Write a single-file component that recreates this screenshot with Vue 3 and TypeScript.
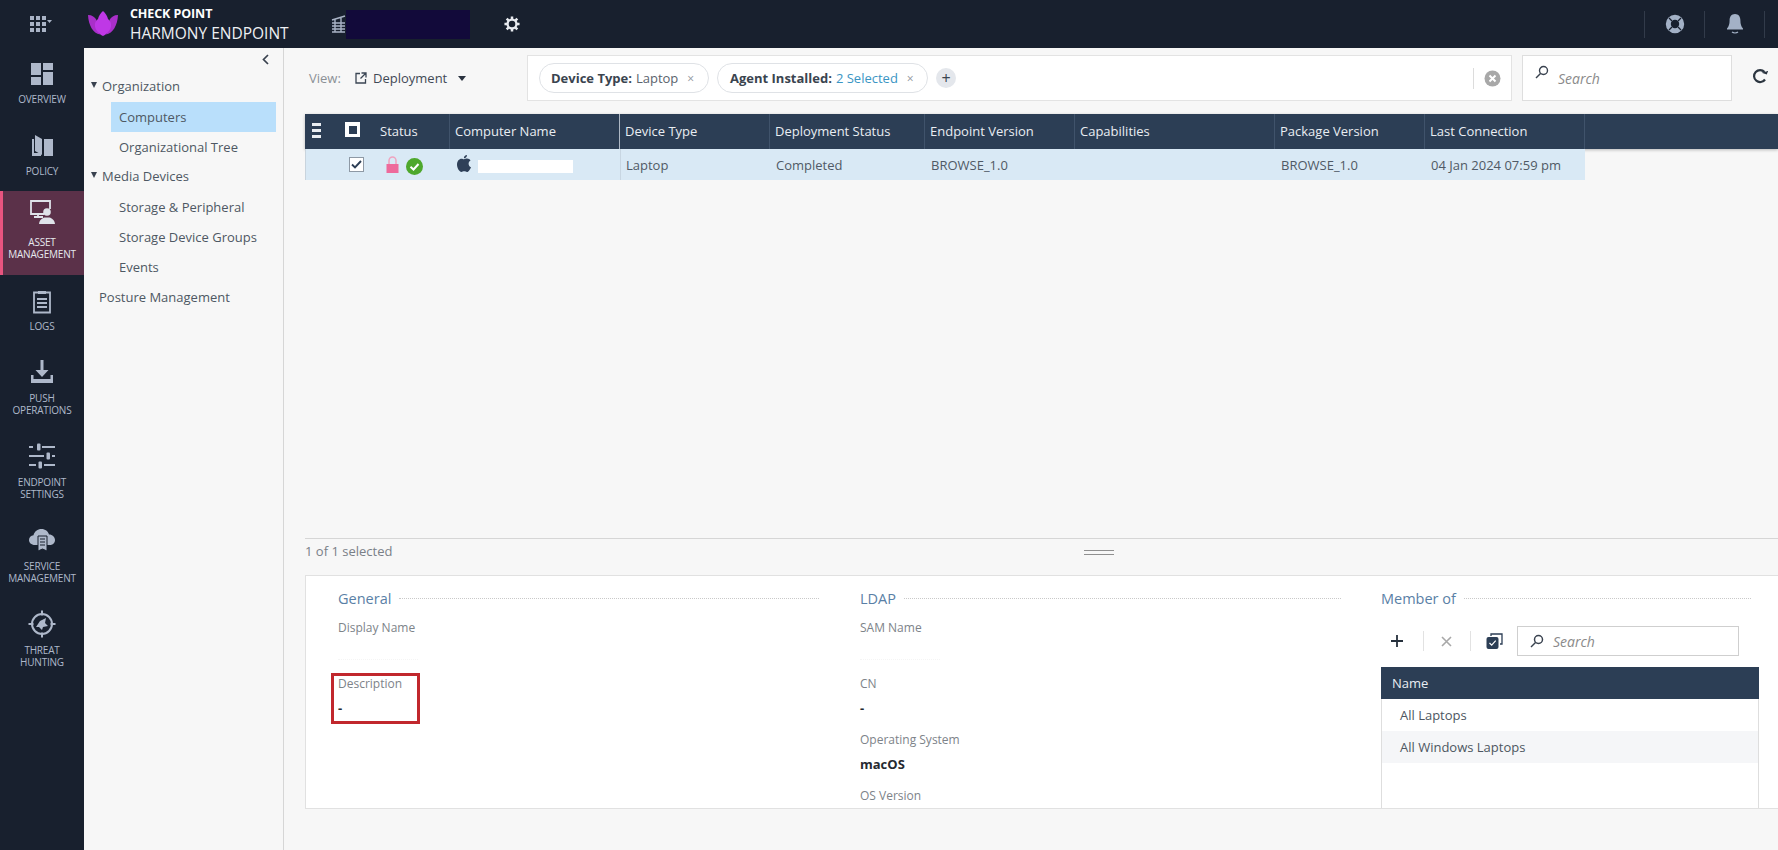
<script setup lang="ts">
interface RailItem { id: string; lines: string[]; kind: string }
const rail: RailItem[] = [
  { id: 'overview', lines: ['OVERVIEW'], kind: 'single' },
  { id: 'policy', lines: ['POLICY'], kind: 'single' },
  { id: 'asset', lines: ['ASSET', 'MANAGEMENT'], kind: 'active' },
  { id: 'logs', lines: ['LOGS'], kind: 'logs' },
  { id: 'push', lines: ['PUSH', 'OPERATIONS'], kind: 'double' },
  { id: 'settings', lines: ['ENDPOINT', 'SETTINGS'], kind: 'double' },
  { id: 'service', lines: ['SERVICE', 'MANAGEMENT'], kind: 'double' },
  { id: 'threat', lines: ['THREAT', 'HUNTING'], kind: 'double' },
]
const columns = ['Device Type', 'Deployment Status', 'Endpoint Version', 'Capabilities', 'Package Version', 'Last Connection']
const cells = ['Laptop', 'Completed', 'BROWSE_1.0', '', 'BROWSE_1.0', '04 Jan 2024 07:59 pm']
</script>

<template>
  <div class="app">
    <header class="topbar">
      <div class="apps">
        <svg width="24" height="16" viewBox="0 0 24 16" fill="#a9b3c6">
          <rect x="0" y="0" width="4" height="4" /><rect x="6" y="0" width="4" height="4" /><rect x="12" y="0" width="4" height="4" />
          <rect x="0" y="6" width="4" height="4" /><rect x="6" y="6" width="4" height="4" /><rect x="12" y="6" width="4" height="4" />
          <rect x="0" y="12" width="4" height="4" /><rect x="6" y="12" width="4" height="4" /><rect x="12" y="12" width="4" height="4" />
          <path d="M17 4h5l-2.500 3z" />
        </svg>
      </div>
      <svg class="lotus" width="32" height="26" viewBox="0 0 32 26">
        <path fill="#a92fc9" d="M1 5c4 0 7 2 8.500 5-.8 5 .6 10 3.600 14.500C6 23.500 1.500 15 1 5zM31 5c-4 0-7 2-8.500 5 .8 5-.6 10-3.600 14.500C26 23.500 30.500 15 31 5z" />
        <path fill="#bf38e6" d="M16 1c2.600 2.400 4.300 5 5 8 2.400 1.800 3.500 4.500 3 7.500-.5 3.600-4 7.500-8 9.500-4-2-7.500-5.900-8-9.500-.5-3 .6-5.700 3-7.500.7-3 2.400-5.600 5-8z" />
      </svg>
      <div class="brand">
        <div class="brand-top">CHECK POINT</div>
        <div class="brand-bottom">HARMONY ENDPOINT</div>
      </div>
      <svg class="tower" width="15" height="19" viewBox="0 0 15 19" fill="none" stroke="#a9b3c6" stroke-width="1.400">
        <path d="M1 5l13-4M1 8h13M1 11h13M1 14h13M1 17h13M4 4v13M10 2v15" />
      </svg>
      <div class="tenant"></div>
      <svg class="gear" width="16" height="16" viewBox="0 0 18 18">
        <circle cx="9" cy="9" r="5" fill="none" stroke="#e8ebf0" stroke-width="2.600" />
        <g stroke="#e8ebf0" stroke-width="2.800" stroke-linecap="butt">
          <path d="M9 0.500v3M9 14.500v3M0.500 9h3M14.500 9h3M3 3l2 2M13 13l2 2M3 15l2-2M13 5l2-2" />
        </g>
      </svg>
      <div class="top-right">
        <span class="divider"></span>
        <span class="top-icon">
          <svg width="20" height="20" viewBox="0 0 20 20">
            <circle cx="10" cy="10" r="6.700" fill="none" stroke="#a3b1c6" stroke-width="5" />
            <g stroke="#18202e" stroke-width="1.300">
              <path d="M4 4l3 3M16 4l-3 3M4 16l3-3M16 16l-3-3" />
            </g>
          </svg>
        </span>
        <span class="divider"></span>
        <span class="top-icon">
          <svg width="18" height="22" viewBox="0 0 18 22" fill="#a3b1c6">
            <path d="M9 1c3.600 0 5.400 2.800 5.400 6.400 0 3.400.8 6 2.600 8.100v1H1v-1c1.800-2.100 2.600-4.700 2.600-8.100C3.600 3.800 5.400 1 9 1z" />
            <path d="M6 19c1.500 1.300 4.500 1.300 6 0" fill="none" stroke="#a3b1c6" stroke-width="1.200" />
          </svg>
        </span>
        <span class="divider"></span>
      </div>
    </header>

    <div class="body">
      <nav class="rail">
        <div v-for="item in rail" :key="item.id" class="rail-item" :class="item.kind">
          <div class="rail-icon">
            <svg v-if="item.id === 'overview'" width="24" height="24" viewBox="0 0 24 24" fill="#aeb8ca">
              <rect x="1" y="1" width="10" height="12" /><rect x="13" y="1" width="10" height="7" />
              <rect x="1" y="15" width="10" height="8" /><rect x="13" y="10" width="10" height="13" />
            </svg>
            <svg v-else-if="item.id === 'policy'" width="24" height="24" viewBox="0 0 24 24" fill="#aeb8ca">
              <path d="M2 5h2v14h7v3H2z" /><path d="M5 1l7 4v16l-7-4z" /><path d="M14 5h9v17h-9z" />
            </svg>
            <svg v-else-if="item.id === 'asset'" width="26" height="26" viewBox="0 0 26 26" fill="none">
              <path d="M15 15H2V2h19v8" stroke="#dfe3ea" stroke-width="1.800" />
              <path d="M5 18h9M9 15v3" stroke="#dfe3ea" stroke-width="1.800" />
              <circle cx="18" cy="13" r="3.800" fill="#dfe3ea" />
              <path d="M10 25c.4-4 3.300-6 5.500-6.500h5c2.200.5 5 2.500 5.500 6.500z" fill="#dfe3ea" />
            </svg>
            <svg v-else-if="item.id === 'logs'" width="22" height="24" viewBox="0 0 22 24" fill="none" stroke="#aeb8ca">
              <path d="M7 2.500H3v20h16v-20h-4" stroke-width="1.800" />
              <path d="M7 1h8v3H7z" fill="#aeb8ca" stroke="none" />
              <path d="M6 9h10M6 13h10M6 17h10" stroke-width="1.800" />
            </svg>
            <svg v-else-if="item.id === 'push'" width="24" height="24" viewBox="0 0 24 24" fill="#aeb8ca">
              <path d="M10.500 0h3v10h5l-6.500 7-6.500-7h5z" /><path d="M1 15h2.500v4h17v-4H23v8H1z" />
            </svg>
            <svg v-else-if="item.id === 'settings'" width="28" height="26" viewBox="0 0 28 26" fill="#aeb8ca">
              <rect x="1" y="3" width="4" height="2" /><rect x="9" y="0.500" width="3.500" height="7" rx="1" /><rect x="14" y="3" width="13" height="2" />
              <rect x="1" y="12" width="15" height="2" /><rect x="18.500" y="9.500" width="3.500" height="7" rx="1" /><rect x="24" y="12" width="3" height="2" />
              <rect x="1" y="21" width="7" height="2" /><rect x="10.500" y="18.500" width="3.500" height="7" rx="1" /><rect x="16" y="21" width="11" height="2" />
            </svg>
            <svg v-else-if="item.id === 'service'" width="28" height="24" viewBox="0 0 28 24">
              <path fill="#aeb8ca" d="M7 17C3 17 1 14.500 1 12s1.800-4.500 4.500-4.800C6.500 3.500 9.500 1 13.500 1c3.800 0 6.500 2.300 7.500 5.500 3.500 0 6 2.500 6 5.500 0 2.800-2 5-5 5z" />
              <path fill="#aeb8ca" stroke="#18202e" stroke-width="1" d="M10 8h9v15l-4.500-2-4.500 2z" />
              <path stroke="#18202e" stroke-width="1" d="M12 11h5M12 14h5M12 17h5" />
            </svg>
            <svg v-else-if="item.id === 'threat'" width="28" height="28" viewBox="0 0 28 28" fill="none" stroke="#aeb8ca">
              <circle cx="14" cy="14" r="10" stroke-width="2" />
              <path d="M14 0.500v5M14 22.500v5M0.500 14h5M22.500 14h5" stroke-width="2" />
              <path d="M8 17l4-6 6-3 -1 5 3 3-5 1-1 3-3-3z" fill="#aeb8ca" stroke="none" />
            </svg>
          </div>
          <div class="rail-label">
            <div v-for="line in item.lines" :key="line">{{ line }}</div>
          </div>
        </div>
      </nav>

      <aside class="tree">
        <div class="collapse">
          <svg width="7" height="11" viewBox="0 0 7 11" fill="none" stroke="#39424f" stroke-width="1.700"><path d="M6 1L1.500 5.500 6 10" /></svg>
        </div>
        <div class="tree-row group"><span class="tri"></span>Organization</div>
        <div class="tree-row child selected">Computers</div>
        <div class="tree-row child">Organizational Tree</div>
        <div class="tree-row group"><span class="tri"></span>Media Devices</div>
        <div class="tree-row child">Storage &amp; Peripheral</div>
        <div class="tree-row child">Storage Device Groups</div>
        <div class="tree-row child">Events</div>
        <div class="tree-row root">Posture Management</div>
      </aside>

      <main class="main">
        <div class="toolbar">
          <div class="view">
            <span class="view-label">View:</span>
            <svg class="view-icon" width="12" height="12" viewBox="0 0 12 12" fill="none" stroke="#3b4654" stroke-width="1.300">
              <path d="M5 1.500H1v9.500h9.500V7M6.500 1h4.500v4.500M11 1L5.500 6.500" />
            </svg>
            <span class="view-value">Deployment</span>
            <span class="caret"></span>
          </div>
          <div class="filters">
            <div class="chip"><b>Device Type:</b><span class="chip-val">Laptop</span><span class="chip-x">×</span></div>
            <div class="chip second"><b>Agent Installed:</b><span class="chip-val link">2 Selected</span><span class="chip-x">×</span></div>
            <div class="add">+</div>
            <div class="filters-end">
              <span class="filters-sep"></span>
              <svg width="17" height="17" viewBox="0 0 17 17">
                <circle cx="8.500" cy="8.500" r="8" fill="#a8a8a8" />
                <path d="M5.500 5.500l6 6M11.500 5.500l-6 6" stroke="#fff" stroke-width="2" />
              </svg>
            </div>
          </div>
          <div class="search-box">
            <svg class="search-icon" width="14" height="14" viewBox="0 0 14 14" fill="none" stroke="#39424f" stroke-width="1.400">
              <circle cx="8.500" cy="5.500" r="4" /><path d="M5.500 8.500L1 13" />
            </svg>
            <span class="search-text">Search</span>
          </div>
          <svg class="refresh" width="16" height="16" viewBox="0 0 16 16" fill="none">
            <path d="M13 11.500A6 6 0 1 1 12.500 4" stroke="#2c3540" stroke-width="2.200" />
            <path d="M10 5.500h5.500V1.500z" fill="#2c3540" transform="rotate(20 12 4)" />
          </svg>
        </div>

        <section class="table-area">
          <div class="thead">
            <div class="tcell first">
              <span class="menu"><i></i><i></i><i></i></span>
              <span class="head-check"><i></i></span>
              <span class="status-title">Status</span>
            </div>
            <div class="tcell name">Computer Name</div>
            <div v-for="c in columns" :key="c" class="tcell">{{ c }}</div>
          </div>
          <div class="trow">
            <div class="rcell first">
              <span class="row-check">
                <svg width="11" height="9" viewBox="0 0 11 9" fill="none" stroke="#2c3e55" stroke-width="1.900"><path d="M1 4.500l3 3 6-6.500" /></svg>
              </span>
              <svg class="lock" width="13" height="17" viewBox="0 0 13 17">
                <path d="M3 8V4.500a3.500 3.500 0 0 1 7 0V8" fill="none" stroke="#efa3bf" stroke-width="1.500" />
                <rect x="0.500" y="8" width="12" height="9" fill="#ee6a9b" />
              </svg>
              <svg class="ok" width="17" height="17" viewBox="0 0 17 17">
                <circle cx="8.500" cy="8.500" r="8.500" fill="#4ea82c" />
                <path d="M4.500 8.800l3 2.700 5-5.500" fill="none" stroke="#fff" stroke-width="2" />
              </svg>
            </div>
            <div class="rcell name">
              <svg class="apple" width="14" height="17" viewBox="0 0 14 17" fill="#2f4058">
                <path d="M10 0c.1 1.700-1.300 3.400-3.100 3.300C6.700 1.700 8.300.1 10 0zM7 4.300c.8 0 1.700-.7 3.100-.7 1.300 0 2.700.7 3.400 1.900-2.800 1.700-2.300 5.500.5 6.700-.7 1.900-2.300 4.800-4 4.800-1 0-1.600-.7-2.800-.7s-1.900.7-2.800.7C2.500 17 0 13 0 9.700 0 6 2.200 3.700 4.500 3.700c1 0 1.800.6 2.500.6z" />
              </svg>
              <span class="redact"></span>
            </div>
            <div v-for="(c, i) in cells" :key="i" class="rcell">{{ c }}</div>
          </div>
        </section>

        <div class="status-bar">
          <span class="selected-count">1 of 1 selected</span>
          <span class="grip"></span>
        </div>

        <section class="details">
          <div class="detail-col">
            <div class="heading"><span>General</span><i></i></div>
            <div class="field"><label>Display Name</label><div class="value blank"></div></div>
            <div class="field marked"><label>Description</label><div class="value">-</div></div>
          </div>
          <div class="detail-col">
            <div class="heading"><span>LDAP</span><i></i></div>
            <div class="field"><label>SAM Name</label><div class="value blank"></div></div>
            <div class="field"><label>CN</label><div class="value">-</div></div>
            <div class="field"><label>Operating System</label><div class="value">macOS</div></div>
            <div class="field"><label>OS Version</label></div>
          </div>
          <div class="detail-col member">
            <div class="heading narrow"><span>Member of</span><i></i></div>
            <div class="member-tools">
              <svg class="tool plus" width="14" height="14" viewBox="0 0 14 14" stroke="#26303c" stroke-width="1.800"><path d="M7 1v12M1 7h12" /></svg>
              <span class="tool-sep"></span>
              <svg class="tool cross" width="11" height="11" viewBox="0 0 11 11" stroke="#a8a8a8" stroke-width="1.600"><path d="M1 1l9 9M10 1l-9 9" /></svg>
              <span class="tool-sep"></span>
              <svg class="tool copy" width="17" height="16" viewBox="0 0 17 16">
                <path d="M5 3V1h11v10h-2" fill="none" stroke="#2c3e55" stroke-width="1.300" />
                <rect x="0.500" y="4" width="12" height="12" rx="2" fill="#2c3e55" />
                <path d="M3.500 10l2.200 2.200 4-4.500" fill="none" stroke="#fff" stroke-width="1.200" />
              </svg>
              <div class="member-search">
                <svg width="14" height="14" viewBox="0 0 14 14" fill="none" stroke="#39424f" stroke-width="1.500">
                  <circle cx="8.500" cy="5.500" r="4" /><path d="M5.500 8.500L1 13" />
                </svg>
                <span class="search-text">Search</span>
              </div>
            </div>
            <div class="member-table">
              <div class="member-head">Name</div>
              <div class="member-row">All Laptops</div>
              <div class="member-row alt">All Windows Laptops</div>
            </div>
          </div>
        </section>
      </main>
    </div>
  </div>
</template>

<style>
html, body { margin: 0; padding: 0; background: #f7f7f7; overflow: hidden; }
</style>

<style scoped>
* { box-sizing: border-box; }
.app { width: 1778px; height: 850px; display: flex; flex-direction: column; font-family: "Open Sans", sans-serif; font-size: 13px; color: #4d5661; background: #f7f7f7; overflow: hidden; }

.topbar { height: 48px; flex: none; background: #18202e; display: flex; align-items: center; }
.apps { width: 87px; padding-left: 30px; display: flex; }
.lotus { margin-right: 11px; margin-top: -2px; }
.brand { width: 199px; color: #fff; line-height: 18px; padding-top: 1px; }
.brand-top { font-size: 12.500px; font-weight: 700; letter-spacing: -0.100px; margin-top: -3px; }
.brand-bottom { font-size: 15.500px; color: #eef0f3; margin-top: 1px; }
.tower { margin-left: 2px; flex: none; }
.tenant { width: 124px; height: 29px; background: #120a3a; }
.gear { margin-left: 34px; }
.top-right { margin-left: auto; display: flex; align-items: center; padding-right: 13px; }
.divider { width: 1px; height: 27px; background: #323b4a; }
.top-icon { width: 59px; display: flex; justify-content: center; padding-left: 1px; }

.body { flex: 1; display: flex; min-height: 0; }
.rail { width: 84px; flex: none; background: #18202e; display: flex; flex-direction: column; }
.rail-item { display: flex; flex-direction: column; align-items: center; color: #aeb8ca; }
.rail-item:first-child { margin-top: -1px; }
.rail-item.single { height: 72px; padding-top: 15px; }
.rail-item.logs { height: 70px; padding-top: 15px; }
.rail-item.double { height: 84px; padding-top: 15px; }
.rail-item.active { height: 84px; padding-top: 9px; background: #5b3149; border-left: 3px solid #e8547f; color: #e6e8ee; padding-right: 3px; }
.rail-icon { height: 24px; display: flex; align-items: center; justify-content: center; }
.rail-label { margin-top: 7px; font-size: 10px; line-height: 12px; text-align: center; white-space: nowrap; letter-spacing: -0.200px; }
.rail-item.active .rail-label { margin-top: 12px; }
.rail-item.logs .rail-label { margin-top: 6px; }
.rail-item.double .rail-label { margin-top: 8px; }

.tree { width: 200px; flex: none; border-right: 1px solid #d6d6d6; background: #f7f7f7; padding-top: 6px; }
.collapse { height: 9px; margin-bottom: 9px; display: flex; justify-content: flex-end; padding-right: 14px; }
.tree-row { height: 30px; line-height: 30px; white-space: nowrap; color: #4e5863; font-size: 13px; }
.tree-row.group { padding-left: 7px; padding-bottom: 3px; display: flex; align-items: center; height: 30px; }
.tri { width: 0; height: 0; border-left: 3px solid transparent; border-right: 3px solid transparent; border-top: 6px solid #39424f; margin-right: 5px; margin-top: -1px; }
.tree-row.child { margin-left: 27px; margin-right: 7px; padding-left: 8px; }
.tree-row.selected { background: #b9dffb; }
.tree-row.root { padding-left: 15px; }

.main { flex: 1; display: flex; flex-direction: column; min-width: 0; }
.toolbar { height: 66px; flex: none; display: flex; align-items: flex-start; padding-left: 25px; padding-top: 7px; }
.view { width: 218px; height: 46px; display: flex; align-items: center; }
.view-label { color: #8b9096; width: 46px; }
.view-icon { margin-right: 6px; }
.view-value { color: #3f4955; }
.caret { margin-left: 11px; width: 0; height: 0; border-left: 4.500px solid transparent; border-right: 4.500px solid transparent; border-top: 5px solid #2a3340; }
.filters { width: 985px; height: 46px; background: #fff; border: 1px solid #e3e3e3; display: flex; align-items: center; padding-left: 11px; }
.chip { height: 30px; width: 170px; border: 1px solid #dfe2e6; border-radius: 15px; display: flex; align-items: center; padding-left: 11px; white-space: nowrap; color: #5a636d; }
.chip.second { width: 211px; margin-left: 8px; padding-left: 12px; }
.chip b { font-weight: 700; color: #3a444f; }
.chip-val { margin-left: 4px; }
.chip .link { color: #3a95c4; }
.chip-x { margin-left: 9px; color: #8f959c; font-size: 12px; }
.add { width: 20px; height: 20px; border-radius: 50%; background: #e4e7ec; color: #3a444f; margin-left: 8px; display: flex; align-items: center; justify-content: center; font-size: 16px; line-height: 18px; }
.filters-end { margin-left: auto; display: flex; align-items: center; padding-right: 10px; }
.filters-sep { width: 1px; height: 21px; background: #dcdcdc; margin-right: 10px; }
.search-box { width: 210px; height: 46px; margin-left: 10px; background: #fff; border: 1px solid #dedede; display: flex; align-items: flex-start; padding-left: 12px; }
.search-icon { margin-top: 9px; }
.search-text { font-style: italic; color: #8a8a8a; font-size: 14px; }
.search-box .search-text { margin-left: 9px; margin-top: 13px; line-height: 20px; }
.refresh { margin-left: 20px; margin-top: 13px; }

.table-area { height: 425px; flex: none; margin-left: 21px; border-bottom: 1px solid #d6d6d6; }
.thead { height: 35px; background: #2c3e55; display: flex; color: #e9edf2; box-shadow: 0 1px 3px rgba(0,0,0,.25); }
.tcell { width: 150px; flex: none; display: flex; align-items: center; padding-left: 5px; padding-bottom: 2px; border-right: 1px solid #40536b; white-space: nowrap; font-weight: 500; font-size: 13px; }
.tcell:nth-child(3) { width: 150px; }
.tcell:nth-child(4) { width: 155px; }
.tcell:nth-child(5) { width: 150px; }
.tcell:nth-child(6) { width: 200px; }
.tcell:nth-child(7) { width: 150px; }
.tcell:nth-child(8) { width: 160px; }
.tcell.first { width: 145px; padding-left: 7px; }
.tcell.name { width: 170px; border-right-color: #aeb8c5; padding-left: 5px; }
.menu { width: 9px; display: flex; flex-direction: column; gap: 3px; margin-right: 24px; }
.menu i { height: 3px; background: #e9edf2; display: block; }
.head-check { width: 15px; height: 15px; background: #fff; display: flex; align-items: center; justify-content: center; margin-top: -2px; }
.head-check i { width: 8px; height: 8px; background: #2c3e55; display: block; }
.status-title { margin-left: 20px; }
.trow { height: 31px; width: 1280px; background: #d9e9f5; display: flex; align-items: center; color: #505a65; border-left: 1px solid #c9d4dd; }
.rcell { width: 150px; flex: none; padding-left: 6px; white-space: nowrap; height: 100%; display: flex; align-items: center; }
.rcell:nth-child(3) { width: 150px; border-left: 1px solid #c8d6e2; padding-left: 5px; }
.rcell:nth-child(4) { width: 155px; }
.rcell:nth-child(5) { width: 151px; }
.rcell:nth-child(6) { width: 199px; }
.rcell:nth-child(7) { width: 150px; }
.rcell:nth-child(8) { width: 160px; }
.rcell.first { width: 143px; padding-left: 43px; }
.row-check { width: 15px; height: 15px; background: #fff; border: 1px solid #8e99a5; display: flex; align-items: center; justify-content: center; }
.lock { margin-left: 22px; }
.ok { margin-left: 7px; margin-top: 3px; }
.rcell.name { width: 171px; padding-left: 8px; align-items: flex-start; padding-top: 6px; }
.redact { width: 95px; height: 13px; background: #fff; margin-left: 7px; margin-top: 5px; }

.status-bar { height: 36px; flex: none; margin-left: 21px; padding-bottom: 9px; display: flex; align-items: center; color: #7a8087; font-size: 13px; }
.selected-count { margin-bottom: 4px; }
.grip { width: 30px; height: 5px; border-top: 1px solid #8f8f8f; border-bottom: 1px solid #8f8f8f; margin-left: 692px; }

.details { height: 234px; flex: none; margin-left: 21px; background: #fff; border: 1px solid #e1e1e1; border-right: none; overflow: hidden; display: grid; grid-template-columns: 481px 480px 378px; column-gap: 41px; padding: 12px 0 0 32px; }
.detail-col:nth-child(2) { margin-right: -1px; }
.heading { height: 20px; display: flex; align-items: center; color: #5a7fa6; font-size: 14.500px; margin-bottom: 12px; white-space: nowrap; }
.heading i { flex: 1; margin-left: 8px; border-top: 1px dotted #c9c9c9; }
.heading.narrow { width: 370px; }
.field { height: 56px; font-size: 12px; }
.field label { display: block; line-height: 16px; color: #7d8389; }
.value { margin-top: 8px; line-height: 16px; font-weight: 700; color: #25292f; font-size: 13px; }
.value.blank { height: 16px; width: 80px; border-bottom: 1px dotted #f5f5f5; }
.field.marked { width: 83px; height: 45px; margin-left: -4px; padding-left: 4px; outline: 3px solid #c1272d; }
.member-tools { height: 30px; margin-top: 18px; margin-bottom: 11px; display: flex; align-items: center; }
.tool.plus { margin-left: 9px; }
.tool-sep { width: 1px; height: 20px; background: #e2e2e2; }
.plus + .tool-sep { margin-left: 19px; }
.tool.cross { margin-left: 17px; }
.cross + .tool-sep { margin-left: 18px; }
.tool.copy { margin-left: 15px; }
.member-search { width: 222px; height: 30px; margin-left: 14px; border: 1px solid #cfcfcf; display: flex; align-items: center; padding-left: 12px; gap: 9px; }
.member-table { width: 378px; border-left: 1px solid #dedede; border-right: 1px solid #dedede; height: 200px; }
.member-head { height: 32px; margin: 0 -1px; background: #2c3e55; color: #e9edf2; line-height: 32px; padding-left: 11px; font-weight: 500; }
.member-row { height: 32px; line-height: 32px; padding-left: 18px; color: #4d5661; }
.member-row.alt { background: #f5f6f8; }
</style>
